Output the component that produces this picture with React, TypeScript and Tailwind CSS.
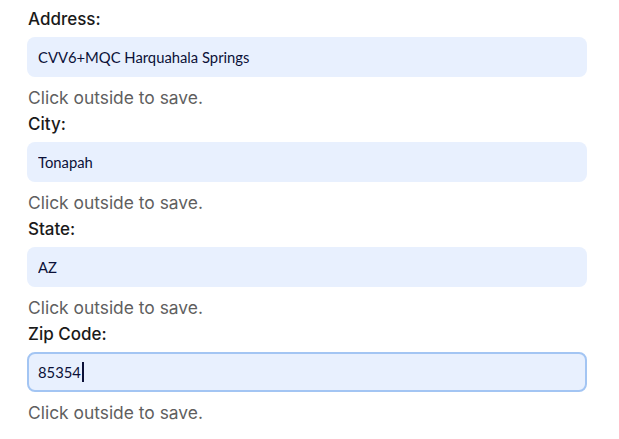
const fields = [
  { label: "Address:", value: "CVV6+MQC Harquahala Springs" },
  { label: "City:", value: "Tonapah" },
  { label: "State:", value: "AZ" },
  { label: "Zip Code:", value: "85354", focused: true },
];

export default function App() {
  return (
    <div className="bg-white min-h-screen pt-[7px] pl-[27px] font-['Inter',sans-serif]">
      {fields.map((f) => (
        <div key={f.label} className="w-[560px] mb-[2px]">
          <label className="block h-6 leading-6 text-[17px] font-medium text-[#1a1a1a] pl-px">
            {f.label}
          </label>
          <div className="relative mt-[6px]">
            <input
              readOnly
              value={f.value}
              className={
                f.focused
                  ? "block w-full h-10 rounded-lg bg-[#e8f0fe] border-2 border-[#a3c5f3] pl-[9px] text-[14.8px] text-[#0b1038] font-['Lato',sans-serif] outline-none"
                  : "block w-full h-10 rounded-lg bg-[#e8f0fe] border-2 border-transparent pl-[9px] text-[14.8px] text-[#0b1038] font-['Lato',sans-serif] outline-none"
              }
            />
            {f.focused && (
              <span className="absolute left-[55px] top-[10px] w-[2px] h-[20px] bg-[#0b1038]" />
            )}
          </div>
          <p className="mt-[9px] leading-6 text-[17.4px] text-[#5f5f5f] pl-px">
            Click outside to save.
          </p>
        </div>
      ))}
    </div>
  );
}
